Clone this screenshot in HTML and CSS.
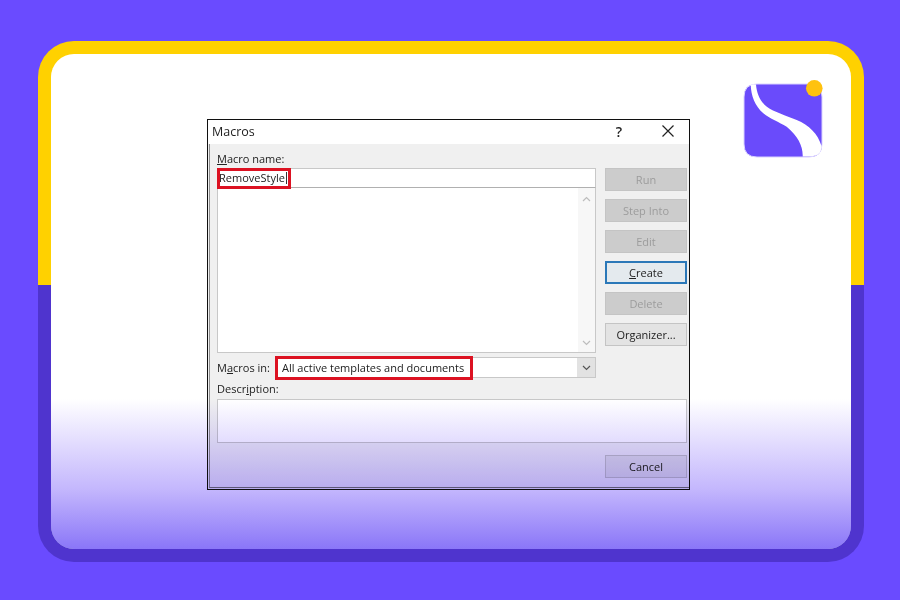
FILE: index.html
```html
<!DOCTYPE html>
<html lang="en">
<head>
<meta charset="utf-8">
<title>Macros</title>
<link rel="stylesheet" href="styles.css">
</head>
<body>
<main class="frame">
  <div class="panel">
    <section class="dialog">
      <header class="titlebar">
        <span class="title">Macros</span>
        <span class="help">?</span>
        <svg class="close" width="14" height="14" viewBox="0 0 14 14"><path d="M1.500 1.500 12.500 12.500M12.500 1.500 1.500 12.500" stroke="#222" stroke-width="1.200" fill="none"/></svg>
      </header>
      <div class="body">
        <div class="columns">
          <div class="left">
            <div class="label name-label"><u>M</u>acro name:</div>
            <div class="input"><span class="red name-red">RemoveStyle<i class="caret"></i></span></div>
            <div class="list">
              <div class="scroll">
                <svg width="9" height="6" viewBox="0 0 9 6"><path d="M1 5 4.500 1.500 8 5" stroke="#bdbdbd" stroke-width="1.200" fill="none"/></svg>
                <svg width="9" height="6" viewBox="0 0 9 6"><path d="M1 1 4.500 4.500 8 1" stroke="#bdbdbd" stroke-width="1.200" fill="none"/></svg>
              </div>
            </div>
            <div class="in-row">
              <span class="label in-label">M<u>a</u>cros in:</span>
              <div class="combo">
                <span class="red in-red">All active templates and documents</span>
                <span class="drop"><svg width="9" height="6" viewBox="0 0 9 6"><path d="M1 1 4.500 4.500 8 1" stroke="#555" stroke-width="1.200" fill="none"/></svg></span>
              </div>
            </div>
          </div>
          <div class="buttons">
            <div class="btn off">Run</div>
            <div class="btn off">Step Into</div>
            <div class="btn off">Edit</div>
            <div class="btn primary"><u>C</u>reate</div>
            <div class="btn off">Delete</div>
            <div class="btn">Or<u>g</u>anizer...</div>
          </div>
        </div>
        <div class="label desc-label">Descr<u>i</u>ption:</div>
        <div class="desc"></div>
        <div class="footer"><div class="btn cancel">Cancel</div></div>
      </div>
    </section>
    <svg class="logo" width="84" height="84" viewBox="0 0 84 84">
      <path d="M14 4H66Q79 4 79 17V64Q79 77 66 77H14Q1 77 1 64V17Q1 4 14 4Z" fill="#6a4bfb" stroke="#d9d2ff" stroke-width="1"/>
      <path d="M7.700 4.500H13C14 17 20 26 30 30.500C38 34 46 37 53.700 40C66 45 75 54 78.500 66Q78.500 76.500 66 76.500H59.700C60 66 55 56 43.700 46.700C36 42 27 39 20.300 33.300C12 26 8 16 7.700 4.500Z" fill="#fff"/>
      <circle cx="71.300" cy="8.300" r="8.300" fill="#ffc20e"/>
    </svg>
    <div class="fade"></div>
  </div>
</main>
</body>
</html>
```
FILE: styles.css
```css
* { box-sizing: border-box; }
html, body { margin: 0; height: 100%; }
body {
  width: 900px;
  height: 600px;
  overflow: hidden;
  background: #6a4bff;
  padding: 41px 36px 38px 38px;
  font-family: "Open Sans", "Liberation Sans", sans-serif;
}
.frame {
  height: 521px;
  border-radius: 36px;
  padding: 13px;
  background: linear-gradient(to bottom, #ffd100 0, #ffd100 244px, #4f34ce 244px, #4f34ce 100%);
}
.panel {
  position: relative;
  height: 495px;
  border-radius: 23px;
  background: #fff;
  overflow: hidden;
  padding: 65px 0 0 156px;
}
.fade {
  position: absolute;
  left: 0;
  right: 0;
  bottom: 0;
  height: 150px;
  background: linear-gradient(to bottom, #fff 0, #c4b7fd 60%, #8a76f8 100%);
  mix-blend-mode: multiply;
  pointer-events: none;
}
.logo { position: absolute; left: 692px; top: 26px; }
.dialog {
  width: 483px;
  height: 371px;
  border: 1px solid #101010;
  background: #f0f0f0;
  display: flex;
  flex-direction: column;
}
.titlebar {
  height: 24px;
  background: #fff;
  display: flex;
  align-items: center;
  padding: 0 14px 2px 4px;
  flex: none;
}
.title { font-size: 12.500px; color: #222; flex: 1; }
.help { font-size: 14px; color: #222; font-weight: 600; margin-right: 39px; }
.close { display: block; }
.body {
  flex: 1;
  display: flex;
  flex-direction: column;
  padding: 0 2px 9px 7px;
  margin-left: 1px;
  margin-bottom: 1px;
  border-left: 1px solid #8f8f8f;
  border-bottom: 1px solid #777;
}
.columns { display: flex; gap: 9px; }
.left { width: 379px; flex: none; }
.label { font-size: 11px; color: #222; line-height: 16px; }
.name-label { padding-top: 7px; height: 24px; }
.input {
  height: 20px;
  background: #fff;
  border: 1px solid #c8c8c8;
  border-bottom-color: #b0b0b0;
  position: relative;
}
.red { position: absolute; border: 3px solid #dc1222; font-size: 11px; color: #222; white-space: nowrap; }
.name-red { left: -1px; top: -1px; width: 74px; height: 21px; line-height: 14px; text-indent: -1px; }
.caret { display: inline-block; width: 1px; height: 12px; background: #333; vertical-align: -2px; margin-left: 1px; }
.list {
  height: 165px;
  background: #fff;
  border: 1px solid #c8c8c8;
  border-top: 0;
  display: flex;
  justify-content: flex-end;
}
.scroll {
  width: 17px;
  background: #f7f7f7;
  display: flex;
  flex-direction: column;
  justify-content: space-between;
  align-items: center;
  padding: 8px 0 6px;
}
.scroll svg { display: block; }
.in-row { display: flex; align-items: center; height: 23px; margin-top: 3px; }
.in-label { width: 58px; flex: none; padding-top: 1px; }
.combo {
  flex: 1;
  height: 21px;
  background: #fff;
  border: 1px solid #c8c8c8;
  position: relative;
  display: flex;
  justify-content: flex-end;
}
.in-red { left: -1px; top: -2px; width: 198px; height: 24px; line-height: 18px; padding-left: 4px; }
.drop {
  width: 18px;
  background: #e2e2e2;
  display: flex;
  align-items: center;
  justify-content: center;
}
.buttons { width: 82px; flex: none; padding-top: 24px; display: flex; flex-direction: column; gap: 8px; }
.btn {
  height: 23px;
  font-size: 11px;
  line-height: 22px;
  text-align: center;
  color: #222;
  background: #e3e3e3;
  border: 1px solid #c4c4c4;
}
.off { background: #cccccc; border-color: #c4c4c4; color: #9c9c9c; }
.primary { border: 2px solid #2b78b8; line-height: 20px; background: #e4eaee; }
.desc-label { margin-top: 2px; height: 18px; }
.desc { width: 470px; height: 44px; background: #fff; border: 1px solid #c8c8c8; }
.footer { display: flex; justify-content: flex-end; width: 470px; margin-top: 12px; }
.cancel { width: 82px; }
```
